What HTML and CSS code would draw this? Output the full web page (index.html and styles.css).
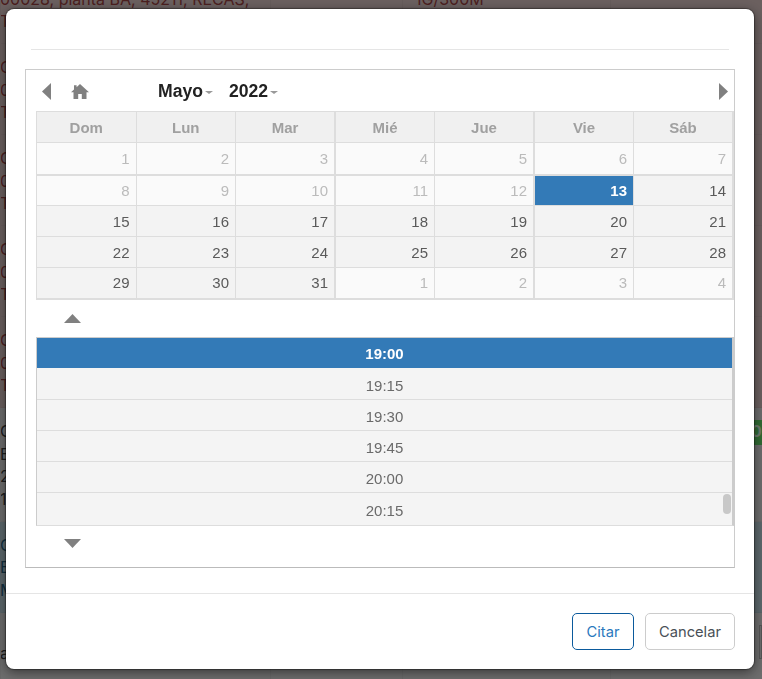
FILE: index.html
```html
<!DOCTYPE html>
<html>
    <head>
        <meta charset="UTF-8">
        <title>Citar</title>
        <link rel="stylesheet" href="styles.css">
    </head>
    <body>
        <!-- list behind the dialog, only its edges show -->
        <div class="page">
            <div class="row row-red">
                <div class="cell"><p>&nbsp;</p><p>00028, planta BA, 45211, RECAS,</p><p>T</p></div>
                <div class="cell"></div>
                <div class="cell"><p>&nbsp;</p><p>1G/300M</p></div>
                <div class="cell"></div>
            </div>
            <div class="row row-red"><div class="cell"><p>C</p><p>0</p><p>T</p></div><div class="cell"></div><div class="cell"></div><div class="cell"></div></div>
            <div class="row row-red"><div class="cell"><p>C</p><p>0</p><p>T</p></div><div class="cell"></div><div class="cell"></div><div class="cell"></div></div>
            <div class="row row-red"><div class="cell"><p>C</p><p>0</p><p>T</p></div><div class="cell"></div><div class="cell"></div><div class="cell"></div></div>
            <div class="row row-red"><div class="cell"><p>C</p><p>0</p><p>T</p></div><div class="cell"></div><div class="cell"></div><div class="cell"></div></div>
            <div class="row row-grey">
                <div class="cell"><p>C</p><p>E</p><p>2</p><p>1</p></div>
                <div class="cell"></div>
                <div class="cell"></div>
                <div class="cell"><span class="badge">0:</span></div>
            </div>
            <div class="row row-blue"><div class="cell"><p>C</p><p>E</p><p>M</p></div><div class="cell"></div><div class="cell"></div><div class="cell"></div></div>
            <div class="row row-grey last">
                <div class="cell"><p class="low">a</p></div>
                <div class="cell"></div>
                <div class="cell"></div>
                <div class="cell"><div class="mini"></div></div>
            </div>
        </div>

        <div class="overlay">
            <div class="modal">
                <div class="modal-header"></div>
                <div class="modal-body">
                    <div class="picker">
                        <div class="nav">
                            <svg class="arrow-left" width="9" height="17" viewBox="0 0 9 17"><path d="M9 0V17L0 8.5Z"/></svg>
                            <svg class="home" width="18" height="15" viewBox="0 0 18 15"><path d="M9 0 18 8.2H15.5V15H10.8V10H7.2V15H2.5V8.2H0L3 5.5V1.2H5.6V3.2Z"/></svg>
                            <span class="title month">Mayo<i class="caret"></i></span>
                            <span class="title">2022<i class="caret"></i></span>
                            <svg class="arrow-right" width="9" height="17" viewBox="0 0 9 17"><path d="M0 0V17L9 8.5Z"/></svg>
                        </div>
                        <table class="days">
                            <thead>
                                <tr><th>Dom</th><th>Lun</th><th class="wide">Mar</th><th>Mié</th><th>Jue</th><th class="wide-left">Vie</th><th class="end">Sáb</th></tr>
                            </thead>
                            <tbody>
                                <tr class="first off">
                                    <td>1</td><td>2</td><td class="wide">3</td><td>4</td><td>5</td><td class="wide-left">6</td><td class="end">7</td>
                                </tr>
                                <tr>
                                    <td class="off">8</td><td class="off">9</td><td class="off wide">10</td><td class="off">11</td><td class="off">12</td><td class="selected wide-left">13</td><td class="end">14</td>
                                </tr>
                                <tr>
                                    <td>15</td><td>16</td><td class="wide">17</td><td>18</td><td>19</td><td class="wide-left">20</td><td class="end">21</td>
                                </tr>
                                <tr>
                                    <td>22</td><td>23</td><td class="wide">24</td><td>25</td><td>26</td><td class="wide-left">27</td><td class="end">28</td>
                                </tr>
                                <tr class="bottom">
                                    <td>29</td><td>30</td><td class="wide">31</td><td class="off">1</td><td class="off">2</td><td class="off wide-left">3</td><td class="off end">4</td>
                                </tr>
                            </tbody>
                        </table>
                        <div class="spin">
                            <svg width="17" height="9" viewBox="0 0 17 9"><path d="M8.5 0 17 9H0Z"/></svg>
                        </div>
                        <div class="times">
                            <div class="time selected">19:00</div>
                            <div class="time">19:15</div>
                            <div class="time">19:30</div>
                            <div class="time">19:45</div>
                            <div class="time">20:00</div>
                            <div class="time">20:15</div>
                            <div class="thumb"></div>
                        </div>
                        <div class="spin spin-down">
                            <svg width="17" height="9" viewBox="0 0 17 9"><path d="M0 0H17L8.5 9Z"/></svg>
                        </div>
                    </div>
                </div>
                <div class="modal-footer">
                    <button class="btn btn-primary">Citar</button>
                    <button class="btn btn-cancel">Cancelar</button>
                </div>
            </div>
        </div>
    </body>
</html>
```

FILE: styles.css
```css
body {
    margin: 0;
    height: 679px;
    overflow: hidden;
    font-family: 'Inter', sans-serif;
    background-color: #d6d6d6;
}
p {
    margin: 0;
}
.page {
    margin-top: -47px;
    font-size: 16px;
    line-height: 22.5px;
    text-indent: -1px;
}
.row {
    display: grid;
    grid-template-columns: 270px 132px 208px 152px;
    border-bottom: 1px solid rgba(0, 0, 0, 0.03);
}
.row-red {
    background-color: #d6c1bf;
    color: #983f3f;
}
.row-grey {
    background-color: #dadada;
    color: #3c3c3c;
}
.row-blue {
    background-color: #b9d0d8;
    color: #26607e;
}
.cell {
    padding: 12px 0 10.5px;
    border-left: 1px solid rgba(0, 0, 0, 0.04);
    white-space: nowrap;
    overflow: hidden;
}
.cell:nth-child(3) {
    padding-left: 13px;
}
.last .cell {
    padding: 0;
    height: 70px;
}
.low {
    padding-top: 29px;
}
.badge {
    display: block;
    margin-left: 130px;
    padding-left: 11px;
    height: 25px;
    background-color: #62d668;
    color: #d8f5da;
    font-weight: 700;
}
.mini {
    margin: 12px 0 0 148px;
    height: 32px;
    border: 1px solid #aaa;
}
.overlay {
    position: fixed;
    top: 0;
    left: 0;
    right: 0;
    bottom: 0;
    padding: 9px 8px 10px 6px;
    background-color: rgba(0, 0, 0, 0.5);
}
.modal {
    height: 660px;
    background-color: #fff;
    border-radius: 8px;
    box-shadow: 0 0 1px 1px rgba(0, 0, 0, 0.35), 0 3px 12px rgba(0, 0, 0, 0.5);
}
.modal-header {
    height: 40px;
    margin: 0 25px;
    border-bottom: 1px solid #e5e5e5;
}
.modal-body {
    padding: 19px 19px 25px;
}
.picker {
    border: 1px solid #ccc;
    border-bottom-color: #bbb;
    height: 497px;
    font-family: 'Liberation Sans', Arial, sans-serif;
}
.nav {
    display: flex;
    align-items: center;
    height: 39px;
    padding: 2px 6px 0 16px;
    fill: #808080;
}
.home {
    margin-left: 20px;
    margin-right: 69px;
}
.title {
    font-size: 17.6px;
    font-weight: 700;
    color: #222;
}
.month {
    margin-right: 16px;
}
.caret {
    display: inline-block;
    margin-left: 2px;
    vertical-align: middle;
    border-top: 3px solid #999;
    border-left: 4px solid transparent;
    border-right: 4px solid transparent;
}
.arrow-right {
    margin-left: auto;
}
.days {
    width: 698px;
    margin-left: 10px;
    border-collapse: collapse;
    table-layout: fixed;
    font-size: 15px;
}
.days th,
.days td {
    height: 31px;
    padding: 0 6px;
    border: 1px solid #ddd;
    box-sizing: border-box;
}
.days th {
    background-color: #f0f0f0;
    color: #a0a0a0;
    font-weight: 700;
}
.days td {
    background-color: #f3f3f3;
    color: #5a5a5a;
    text-align: right;
}
.days .wide {
    border-right-width: 2px;
}
.days .wide-left {
    border-left-width: 2px;
}
.days .end {
    border-right-width: 2px;
}
.days .first td {
    height: 32px;
    border-bottom-width: 2px;
}
.days .bottom td {
    border-bottom-width: 2px;
}
.days .off,
.days .off td {
    background-color: #fafafa;
    color: #bbb;
}
.days td.selected {
    background-color: #337ab7;
    color: #fff;
    font-weight: 700;
}
.spin {
    height: 37px;
    padding-left: 38px;
    display: flex;
    align-items: center;
    fill: #808080;
}
.spin-down {
    height: 35px;
}
.times {
    position: relative;
    width: 695px;
    height: 187px;
    margin-left: 10px;
    border: 1px solid #ccc;
    border-right-width: 2px;
    border-bottom-color: #ddd;
    font-size: 15px;
    background-color: #f4f4f4;
    overflow: hidden;
}
.time {
    height: 30px;
    line-height: 33px;
    border-bottom: 1px solid #ddd;
    text-align: center;
    color: #6a6a6a;
}
.time.selected {
    line-height: 32px;
    background-color: #337ab7;
    border-bottom: none;
    color: #fff;
    font-weight: 700;
}
.time.selected + .time {
    height: 31px;
    line-height: 35px;
}
.time:nth-child(6) {
    height: 31px;
    line-height: 35px;
    border-bottom: none;
}
.thumb {
    position: absolute;
    right: 1px;
    top: 156px;
    width: 8px;
    height: 20px;
    border-radius: 4px;
    background-color: #c8c8c8;
}
.modal-footer {
    display: flex;
    justify-content: flex-end;
    gap: 11px;
    padding: 19px;
    border-top: 1px solid #e5e5e5;
}
.btn {
    height: 37px;
    padding: 0;
    background-color: #fff;
    border: 1px solid #ccc;
    border-radius: 5px;
    color: #495057;
    font-family: 'Inter', sans-serif;
    font-size: 14.7px;
}
.btn-primary {
    width: 62px;
    border-color: #0b5a9c;
    color: #2a78bd;
}
.btn-cancel {
    width: 90px;
}
```
